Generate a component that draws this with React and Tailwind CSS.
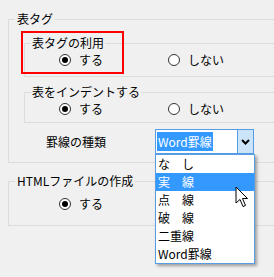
const Radio = ({ checked, label, width }) => (
  <label className={`flex items-center ${width || ""}`}>
    <span className="w-[12px] h-[12px] rounded-full border border-[#333333] bg-white flex items-center justify-center shrink-0">
      {checked && <span className="w-[6px] h-[6px] rounded-full bg-black" />}
    </span>
    <span className="ml-[8px]">{label}</span>
  </label>
);

const options = ["な　し", "実　線", "点　線", "破　線", "二重線", "Word罫線"];

const App = () => {
  return (
    <div
      className="relative w-[274px] h-[277px] overflow-hidden bg-[#f0f0f0] text-[12px] leading-4 text-black"
      style={{ fontFamily: '"Noto Sans CJK JP", "Noto Sans", sans-serif' }}
    >
      <div className="pt-[11px] pl-[8px]">
        <fieldset className="w-[300px] border border-[#dcdcdc] pb-[8px]">
          <legend className="ml-[6px] px-[2px] leading-4">表タグ</legend>

          <fieldset className="ml-[15px] mt-[8px] w-[300px] border border-[#dcdcdc] pb-[8px]">
            <legend className="ml-[6px] px-[1px] leading-4">表タグの利用</legend>
            <div className="mt-[1px] h-4 flex items-center pl-[34px]">
              <Radio checked label="する" width="w-[109px]" />
              <Radio label="しない" />
            </div>
          </fieldset>

          <fieldset className="ml-[15px] mt-[7px] w-[300px] border border-[#dcdcdc] pb-[5px]">
            <legend className="ml-[6px] px-[1px] leading-4">表をインデントする</legend>
            <div className="mt-[1px] h-4 flex items-center pl-[34px]">
              <Radio checked label="する" width="w-[109px]" />
              <Radio label="しない" />
            </div>
          </fieldset>

          <div className="mt-[6px] flex items-center pl-[37px]">
            <span className="w-[109px]">罫線の種類</span>
            <div className="relative w-[99px] h-[25px] border border-[#569de5] bg-white flex">
              <div className="flex-1 flex items-center pl-[1px]">
                <span className="h-[19px] px-[1px] bg-[#3399ff] text-white leading-[19px]">Word罫線</span>
              </div>
              <div className="w-[16px] bg-[#cce4f7] border-l border-[#569de5] flex items-center justify-center">
                <svg width="9" height="6" viewBox="0 0 9 6">
                  <polyline points="1,1 4.5,4.5 8,1" fill="none" stroke="#000" strokeWidth="2" />
                </svg>
              </div>
              <ul className="absolute left-[-1px] top-[24px] w-[100px] border border-[#569de5] bg-white shadow-[2px_2px_3px_rgba(0,0,0,0.35)] z-10">
                {options.map((o, i) => (
                  <li
                    key={o}
                    className={`h-[18px] leading-[18px] pl-[2px] ${i === 1 ? "bg-[#3399ff] text-white" : ""}`}
                  >
                    {o}
                  </li>
                ))}
              </ul>
            </div>
          </div>
        </fieldset>

        <fieldset className="mt-[10px] w-[300px] border border-[#dcdcdc] pb-[13px]">
          <legend className="ml-[6px] px-[2px] leading-4">HTMLファイルの作成</legend>
          <div className="mt-[7px] h-4 flex items-center pl-[50px]">
            <Radio checked label="する" width="w-[109px]" />
          </div>
        </fieldset>
      </div>

      {/* annotation frame */}
      <div className="absolute left-[21px] top-[31px] w-[103px] h-[43px] border-2 border-[#ff0000] pointer-events-none" />

      {/* mouse pointer */}
      <svg className="absolute left-[235px] top-[186px] z-20" width="14" height="22" viewBox="0 0 14 22">
        <path d="M1 1 L1 17 L5 13.5 L8 20.5 L10.5 19.5 L7.5 12.5 L12.5 12.5 Z" fill="#fff" stroke="#000" strokeWidth="1" strokeLinejoin="round" />
      </svg>
    </div>
  );
};

export default App;
